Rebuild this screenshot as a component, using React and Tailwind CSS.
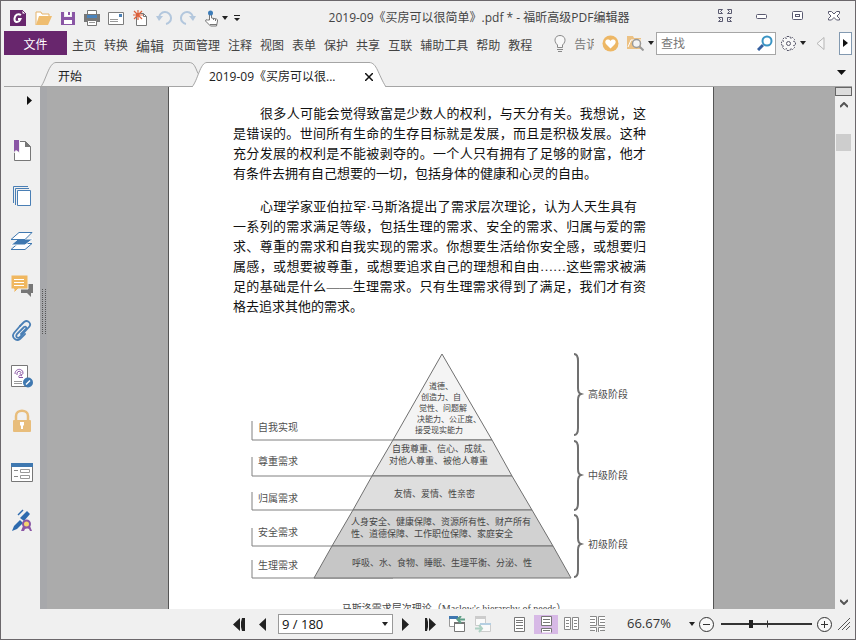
import React, { useState } from "react";

const menus = ["主页", "转换", "编辑", "页面管理", "注释", "视图", "表单", "保护", "共享", "互联", "辅助工具", "帮助", "教程"];

const levels = [
  { label: "自我实现", labelY: 79, tickY: 69, lineY: 88, fill: "#f4f4f4", points: "192,2 242,88 143,88" },
  { label: "尊重需求", labelY: 113, tickY: 105, lineY: 124, fill: "#e8e8e8", points: "143,88 242,88 262,124 122,124" },
  { label: "归属需求", labelY: 150, tickY: 140, lineY: 158, fill: "#dedede", points: "122,124 262,124 282,158 103,158" },
  { label: "安全需求", labelY: 184, tickY: 176, lineY: 194, fill: "#d2d2d2", points: "103,158 282,158 303,194 82,194" },
  { label: "生理需求", labelY: 217, tickY: 208, lineY: 226, fill: "#c6c6c6", points: "82,194 303,194 321,226 64,226" },
];

const stages = [
  { label: "高级阶段", top: 2, mid: 42, bottom: 83 },
  { label: "中级阶段", top: 89, mid: 123, bottom: 158 },
  { label: "初级阶段", top: 163, mid: 192, bottom: 225 },
];

const notes = [
  { x: 179, y: 37, text: "道德、", small: true },
  { x: 171, y: 48, text: "创造力、自", small: true },
  { x: 169, y: 59, text: "觉性、问题解", small: true },
  { x: 167, y: 70, text: "决能力、公正度、", small: true },
  { x: 165, y: 81, text: "接受现实能力", small: true },
  { x: 142, y: 100, text: "自我尊重、信心、成就、" },
  { x: 139, y: 112, text: "对他人尊重、被他人尊重" },
  { x: 144, y: 145, text: "友情、爱情、性亲密" },
  { x: 101, y: 173, text: "人身安全、健康保障、资源所有性、财产所有" },
  { x: 101, y: 185, text: "性、道德保障、工作职位保障、家庭安全" },
  { x: 102, y: 214, text: "呼吸、水、食物、睡眠、生理平衡、分泌、性" },
];

const Caret = () => (
  <svg width="6" height="4" viewBox="0 0 6 4" className="shrink-0">
    <path d="M0 0h6L3 4z" fill="#222" />
  </svg>
);

const IconButton = ({ label, className = "", children }) => (
  <button aria-label={label} title={label} className={`flex shrink-0 items-center justify-center ${className}`}>
    {children}
  </button>
);

const TitleBar = () => (
  <header className="flex h-[30px] shrink-0 items-center pt-1 pl-[9px] pr-[15px]">
    <svg width="17" height="17" viewBox="0 0 17 17" className="shrink-0">
      <path d="M0 0h12l4 4v12H0z" fill="#68266d" />
      <path d="M12 0v4h4z" fill="#fff" stroke="#68266d" />
      <path d="M11 5C8 3 5 5 4.500 8.500 4 13 9 13 10.500 9H8" fill="none" stroke="#fff" strokeWidth="2" />
    </svg>
    <div className="ml-2 flex items-center gap-2">
      <IconButton label="打开" className="w-[17px]">
        <svg width="17" height="16" viewBox="0 0 17 16">
          <path d="M1 15V2h5l1 2h7v3" fill="#fff" stroke="#e5b36a" />
          <path d="M1 15L4 6h13l-4 9z" fill="#efbd70" />
        </svg>
      </IconButton>
      <IconButton label="保存" className="w-4">
        <svg width="15" height="15" viewBox="0 0 15 15">
          <path d="M0 1h3v5h8V1h3v13H0z" fill="#8a56a5" />
          <path d="M4 1h6v4H4z" fill="#fff" />
          <path d="M7 1h2v3H7z" fill="#8a56a5" />
          <path d="M3 9h8v4H3z" fill="#fff" />
        </svg>
      </IconButton>
      <IconButton label="打印" className="w-4">
        <svg width="16" height="16" viewBox="0 0 16 16">
          <path d="M3.500 5V.5h9V5" fill="#fff" stroke="#777" />
          <path d="M0 4h16v8H0z" fill="#777" />
          <path d="M3 5h10v3H3z" fill="#4a83bb" />
          <path d="M3.500 10.500h9v5h-9z" fill="#fff" stroke="#777" />
          <path d="M5 12.500h6" stroke="#999" />
        </svg>
      </IconButton>
      <IconButton label="电子邮件" className="w-4">
        <svg width="16" height="13" viewBox="0 0 16 13">
          <path d="M.5.5h15v12H.5z" fill="#fff" stroke="#7d7d7d" />
          <path d="M11 2h3v3h-3z" fill="#4a7fb5" />
          <path d="M2 7.500h8M2 9.500h8" stroke="#999" />
        </svg>
      </IconButton>
      <IconButton label="新建" className="w-4">
        <svg width="15" height="17" viewBox="0 0 15 17">
          <path d="M3.500 3.500h7l3 3v9h-10z" fill="#fff" stroke="#777" />
          <path d="M10.500 3.500v3h3" fill="none" stroke="#777" />
          <path d="M5 0v10M0 5h10M1 1l8 8M9 1L1 9" stroke="#e0603a" strokeWidth="1.200" />
        </svg>
      </IconButton>
      <IconButton label="撤销" className="w-4">
        <svg width="16" height="16" viewBox="0 0 16 16">
          <path d="M3 8a6 6 0 1 1 7 6" fill="none" stroke="#b3c7dd" strokeWidth="2" />
          <path d="M0 6h7l-4 5z" fill="#b3c7dd" />
        </svg>
      </IconButton>
      <IconButton label="重做" className="w-4">
        <svg width="16" height="16" viewBox="0 0 16 16">
          <path d="M13 8a6 6 0 1 0-7 6" fill="none" stroke="#b3c7dd" strokeWidth="2" />
          <path d="M16 6H9l4 5z" fill="#b3c7dd" />
        </svg>
      </IconButton>
      <IconButton label="手型工具" className="gap-0.5">
        <svg width="16" height="17" viewBox="0 0 16 17">
          <path d="M5.500 10V3.500q1-1.500 2 0V8l5 1q1.500.5 1 2l-1 5h-6l-5-5q0-2 2-1z" fill="#fff" stroke="#777" />
          <path d="M9.500 8v2M11.500 9v2M6 14.500h7" stroke="#777" />
          <circle cx="6.500" cy="3" r="2.500" fill="#3c7cb8" />
        </svg>
        <Caret />
      </IconButton>
      <IconButton label="自定义快速访问工具栏" className="-ml-0.5">
        <svg width="6" height="7" viewBox="0 0 6 7">
          <path d="M0 0h6v1H0zM0 3h6L3 6z" fill="#222" />
        </svg>
      </IconButton>
    </div>
    <h1 className="min-w-0 flex-1 truncate text-center text-[12px] text-[#444]">
      2019-09《买房可以很简单》.pdf * - 福昕高级PDF编辑器
    </h1>
    <div className="flex items-center text-[#5a5a70]">
      <IconButton label="全屏" className="-mt-1">
        <svg width="15" height="14" viewBox="0 0 15 14" fill="none" stroke="currentColor">
          <path d="M.5.5h4l-2 2 2 2h-4zM9.500.5h4v4h-4l2-2zM.5 8.500h4v4h-4l2-2zM9.500 8.500h4l-2 2 2 2h-4z" />
        </svg>
      </IconButton>
      <IconButton label="最小化" className="-mt-1 ml-[23px]">
        <svg width="11" height="5" viewBox="0 0 11 5">
          <rect x=".5" y=".5" width="10" height="4" rx="1" fill="#fff" stroke="currentColor" />
        </svg>
      </IconButton>
      <IconButton label="还原" className="-mt-1 ml-[25px]">
        <svg width="11" height="10" viewBox="0 0 11 10">
          <rect x=".5" y=".5" width="10" height="8" rx="1" fill="#fff" stroke="currentColor" />
          <rect x="3.500" y="3.500" width="4" height="2" fill="none" stroke="currentColor" />
        </svg>
      </IconButton>
      <IconButton label="关闭" className="-mt-1 ml-[25px]">
        <svg width="12" height="10" viewBox="0 0 12 10">
          <path d="M.5.5h3l2.500 2.500L8.500.5h3v2L9 5l2.500 2.500v1.500h-3L6 6.500 3.500 9h-3V7.500L3 5 .5 2.500z" fill="#fff" stroke="currentColor" />
        </svg>
      </IconButton>
    </div>
  </header>
);

const MenuBar = () => {
  const [query, setQuery] = useState("");

  return (
    <nav className="flex h-6 shrink-0 items-center pl-[3px] pr-[3px] text-[12px] text-[#444]">
      <button className="h-6 w-[63px] shrink-0 bg-[#68266d] pt-1 text-white">文件</button>
      <div className="ml-[5px] flex shrink-0 items-center gap-2 pt-1.5">
        {menus.map((name) => (
          <button key={name} className={name === "编辑" ? "text-sm leading-5" : "leading-5"}>
            {name}
          </button>
        ))}
      </div>
      <button className="ml-[22px] flex min-w-0 flex-1 items-center gap-2 overflow-hidden text-[#777]">
        <svg width="12" height="17" viewBox="0 0 12 17" className="shrink-0">
          <path d="M3.500 12.500V10C-1 6 1 .5 6 .5S13 6 8.500 10v2.500z" fill="#f8f8f8" stroke="#888" />
          <path d="M3 14.500h6M4 16.500h4" stroke="#888" />
        </svg>
        <span className="w-5 overflow-hidden pt-1 text-left whitespace-nowrap">告诉</span>
      </button>
      <div className="flex shrink-0 items-center">
        <IconButton label="收藏">
          <svg width="17" height="17" viewBox="0 0 17 17">
            <circle cx="8.500" cy="8.500" r="8" fill="#edb765" />
            <path d="M8.500 13.500L4 9C1.500 5 6.500 3 8.500 6c2-3 7-1 4.500 3z" fill="#fff" />
          </svg>
        </IconButton>
        <IconButton label="查找文件" className="ml-2 gap-1">
          <svg width="17" height="16" viewBox="0 0 17 16">
            <path d="M0 1h6l1 2h7v11H0z" fill="#ecc183" />
            <path d="M1 12l3-7h10" fill="none" stroke="#fff" />
            <circle cx="9.500" cy="8.500" r="4" fill="#f3f3f3" stroke="#999" strokeWidth="1.500" />
            <path d="M12.500 11.500l4 4" stroke="#999" strokeWidth="2" />
          </svg>
          <Caret />
        </IconButton>
        <div className="ml-0.5 flex h-[23px] w-[120px] items-center border border-[#a6a6a6] bg-white pr-0.5">
          <input
            type="text"
            aria-label="查找"
            placeholder="查找"
            className="min-w-0 flex-1 pt-0.5 pl-1 text-[12px] leading-5 outline-none placeholder:text-[#777]"
            value={query}
            onChange={(e) => setQuery(e.target.value)}
          />
          <IconButton label="搜索">
            <svg width="16" height="16" viewBox="0 0 16 16">
              <path d="M1 15l5-5" stroke="#3560a0" strokeWidth="3" />
              <circle cx="10" cy="6" r="4.500" fill="#fff" stroke="#3a94c4" strokeWidth="2" />
            </svg>
          </IconButton>
        </div>
        <IconButton label="设置" className="ml-[5px] gap-1">
          <svg width="15" height="15" viewBox="0 0 15 15" fill="none" stroke="#555568">
            <path
              d="M6 .5h3l.5 2 2-1 2 2-1 2 2 .5v3l-2 .5 1 2-2 2-2-1-.5 2H6l-.5-2-2 1-2-2 1-2-2-.5V6l2-.5-1-2 2-2 2 1z"
              fill="#f8f8f8"
              strokeDasharray="2 1"
            />
            <circle cx="7.500" cy="7.500" r="2" />
          </svg>
          <Caret />
        </IconButton>
        <IconButton label="上一个" className="ml-2.5">
          <svg width="9" height="13" viewBox="0 0 9 13">
            <path d="M8 .5v12L1 6.500z" fill="#f6f6f6" stroke="#b5b5b5" />
          </svg>
        </IconButton>
        <IconButton label="下一个" className="ml-3.5 h-[23px] w-[13px] border border-[#8299b0] bg-white">
          <svg width="5" height="8" viewBox="0 0 5 8">
            <path d="M0 0l5 4-5 4z" fill="#111" />
          </svg>
        </IconButton>
      </div>
    </nav>
  );
};

const TabBar = () => (
  <div className="mt-[7px] flex h-[25px] shrink-0 items-stretch pl-[3px] pr-[3px] text-[12px] text-[#222]">
    <span className="w-[37px] border-b border-[#a5a5a5]" />
    <button className="relative w-[151px] shrink-0 pt-1 pl-[17px] text-left">
      <svg width="159" height="25" viewBox="0 0 159 25" className="absolute top-0 left-0">
        <path d="M0 24.500C5 18 8 .5 15 .5h133c5 0 6 4 9 11M0 24.500h159" fill="none" stroke="#a5a5a5" />
      </svg>
      开始
    </button>
    <div className="relative flex w-[193px] shrink-0 items-center justify-between pt-1 pr-3 pl-[17px]">
      <svg width="194" height="25" viewBox="0 0 194 25" className="absolute top-0 left-0">
        <path d="M0 25C6 18 8 .5 15 .5h162c8 0 9 12 17 24.500" fill="#fff" stroke="#a5a5a5" />
      </svg>
      <button className="relative">2019-09《买房可以很...</button>
      <IconButton label="关闭标签" className="relative">
        <svg width="8" height="8" viewBox="0 0 8 8">
          <path d="M0 0l8 8M8 0L0 8" stroke="#111" strokeWidth="1.500" />
        </svg>
      </IconButton>
    </div>
    <div className="flex flex-1 items-center justify-end border-b border-[#a5a5a5] pr-1.5">
      <IconButton label="标签列表" className="-mt-1">
        <svg width="9" height="5" viewBox="0 0 9 5">
          <path d="M0 0h9L4.500 5z" fill="#111" />
        </svg>
      </IconButton>
    </div>
  </div>
);

const SideBar = () => (
  <aside className="flex w-[39px] shrink-0 flex-col items-center pl-0.5">
    <IconButton label="展开" className="mt-2 ml-4 h-2.5">
      <svg width="5" height="9" viewBox="0 0 5 9">
        <path d="M0 0l5 4.500L0 9z" fill="#111" />
      </svg>
    </IconButton>
    <div className="mt-[34px] flex flex-col gap-[21px]">
      <IconButton label="书签" className="h-6">
        <svg width="22" height="22" viewBox="0 0 22 22">
          <path d="M3.500 1.500h11l5 5v14h-16z" fill="#fff" stroke="#777" />
          <path d="M14 1v6h6z" fill="#777" />
          <path d="M2 0h7v14l-3-3-4 3z" fill="#f0f0f0" />
          <path d="M3 0h5v12l-3-2-2 2z" fill="#8a56a5" />
        </svg>
      </IconButton>
      <IconButton label="页面缩略图" className="h-6">
        <svg width="22" height="22" viewBox="0 0 22 22" fill="none" stroke="#4a7fb5">
          <path d="M2.500 18V1.500H17M4.500 20V3.500H18" />
          <path d="M6.500 5.500h13v15h-13z" fill="#fff" />
        </svg>
      </IconButton>
      <IconButton label="图层" className="h-6">
        <svg width="24" height="20" viewBox="0 0 24 20">
          <path d="M1 18.500l7-6h14l-7 6z" fill="#fff" stroke="#3f78b0" />
          <path d="M1 14l7-6h15l-8 6z" fill="#3f78b0" stroke="#fff" />
          <path d="M1 8.500l8-7h13l-7 7z" fill="#fff" stroke="#3f78b0" />
        </svg>
      </IconButton>
      <IconButton label="注释" className="h-6">
        <svg width="22" height="22" viewBox="0 0 22 22">
          <path d="M10 9h12v9h-2v4l-4-4h-6z" fill="#777" />
          <path d="M0 0h17v14H7l-4 4v-4H0z" fill="#f0b75f" stroke="#f0f0f0" />
          <path d="M3 4.500h10M3 7.500h10M3 10.500h10" stroke="#fff" />
        </svg>
      </IconButton>
      <IconButton label="附件" className="h-6">
        <svg width="22" height="22" viewBox="0 0 22 22" fill="none" stroke="#4a7fb5" strokeWidth="1.800" strokeLinecap="round">
          <path d="M9 6l4-4c4-3 8 2 5 5l-9 10c-2 2-5 0-3-3l7-7c2-1 3 1 2 2l-5 5" />
          <path d="M9 6l-6 7c-3 4 2 9 6 6l5-5" />
        </svg>
      </IconButton>
      <IconButton label="签名" className="h-6">
        <svg width="23" height="24" viewBox="0 0 23 24">
          <path d="M1.500 1.500h16v21h-16z" fill="#fff" stroke="#777" />
          <path d="M5 10c0-6 8-6 8-1 0 2-3 2-3 0M7 11c-1-4 4-5 4-2M12 12c-2-2-4 0-3 1.500h4" fill="none" stroke="#8a56a5" />
          <path d="M4 17.500h8M4 19.500h8" stroke="#999" />
          <circle cx="18" cy="18.500" r="5" fill="#3f78b0" />
          <path d="M16 20.500l4-4" stroke="#fff" strokeWidth="1.500" />
        </svg>
      </IconButton>
      <IconButton label="安全" className="h-6">
        <svg width="20" height="24" viewBox="0 0 20 24">
          <path d="M4 12V7c0-7 12-7 12 0v5" fill="none" stroke="#e8bd7b" strokeWidth="2.500" />
          <rect x="1" y="11" width="18" height="12" rx="1" fill="#e8bd7b" />
          <path d="M8 13h4v3l-1 1v3H9v-3l-1-1z" fill="#fff" />
        </svg>
      </IconButton>
    </div>
    <IconButton label="域" className="mt-7 h-6">
      <svg width="22" height="20" viewBox="0 0 22 20">
        <path d="M.5 2.500h21v16H.5z" fill="#fff" stroke="#777" />
        <path d="M0 0h22v4H0z" fill="#3f78b0" />
        <path d="M3 7.500h4M3 13.500h4" stroke="#888" />
        <path d="M9.500 6.500h9v3h-9zM9.500 12.500h9v3h-9z" fill="none" stroke="#999" />
      </svg>
    </IconButton>
    <IconButton label="数字签名" className="mt-6 h-6">
      <svg width="22" height="24" viewBox="0 0 22 24">
        <path d="M1 22l2-5 6-6 3 3-6 6z" fill="#2d6aae" />
        <path d="M9 9l7-7 3 3-6 7z" fill="#2d6aae" />
        <path d="M7 6l5-5" stroke="#2d6aae" strokeWidth="1.500" />
        <path d="M12 17l-2 5h3l1-2 2-1 2 1 1 2h2l-2-5z" fill="#8a56a5" />
        <circle cx="15.500" cy="15" r="3.500" fill="#f5d56e" stroke="#8a56a5" strokeWidth="2" />
      </svg>
    </IconButton>
  </aside>
);

const HierarchyChart = () => (
  <svg
    viewBox="0 0 384 230"
    role="img"
    aria-label="马斯洛需求层次理论"
    className="mt-[35px] ml-[17px] h-[230px] w-[384px] font-['Noto_Sans_CJK_SC',sans-serif]"
  >
    {levels.map((l) => (
      <g key={l.label}>
        <path d={`M2 ${l.tickY}V${l.lineY}H143`} fill="none" stroke="#808080" />
        <polygon points={l.points} fill={l.fill} stroke="#707070" />
        <text x="8" y={l.labelY} fontSize="10" fill="#505050">{l.label}</text>
      </g>
    ))}
    {notes.map((n) => (
      <text key={n.text} x={n.x} y={n.y} fontSize={n.small ? 8 : 9} fill="#454545">
        {n.text}
      </text>
    ))}
    {stages.map((s) => (
      <g key={s.label}>
        <path
          d={`M324 ${s.top}q4 0 4 7V${s.mid - 6}q0 5 3 6q-3 1-3 6V${s.bottom - 7}q0 7-4 7`}
          fill="none"
          stroke="#707070"
          strokeWidth="2"
        />
        <text x="338" y={s.mid + 4} fontSize="10" fill="#505050">{s.label}</text>
      </g>
    ))}
  </svg>
);

const DocumentPage = () => (
  <article className="w-[546px] shrink-0 overflow-hidden border-x border-[#555] bg-white pt-[17px] pr-[67px] pl-16 font-['Liberation_Serif','Noto_Sans_CJK_SC',serif] text-[13px] leading-5 text-[#111]">
    <p className="text-justify indent-[27px]">
      很多人可能会觉得致富是少数人的权利，与天分有关。我想说，这是错误的。世间所有生命的生存目标就是发展，而且是积极发展。这种充分发展的权利是不能被剥夺的。一个人只有拥有了足够的财富，他才有条件去拥有自己想要的一切，包括身体的健康和心灵的自由。
    </p>
    <p className="mt-[13px] text-justify indent-[27px]">
      <span className="block pr-[9px] [text-align-last:justify]">心理学家亚伯拉罕·马斯洛提出了需求层次理论，认为人天生具有</span>
      <span className="block indent-0">
        一系列的需求满足等级，包括生理的需求、安全的需求、归属与爱的需求、尊重的需求和自我实现的需求。你想要生活给你安全感，或想要归属感，或想要被尊重，或想要追求自己的理想和自由……这些需求被满足的基础是什么——生理需求。只有生理需求得到了满足，我们才有资格去追求其他的需求。
      </span>
    </p>
    <HierarchyChart />
    <p className="mt-[17px] pl-[29px] text-center text-[10px] whitespace-nowrap text-[#444]">
      马斯洛需求层次理论（Maslow's hierarchy of needs）
    </p>
  </article>
);

const ScrollBar = () => (
  <div className="flex w-[17px] shrink-0 flex-col items-center bg-[#f0f0f0]">
    <button aria-label="拆分" className="h-[9px] w-full border border-[#666] bg-[#ddd]" />
    <IconButton label="向上滚动" className="h-[18px]">
      <svg width="8" height="6" viewBox="0 0 8 6">
        <path d="M0 5l4-4 4 4" fill="none" stroke="#555" strokeWidth="2" />
      </svg>
    </IconButton>
    <div className="mt-5 h-[17px] w-[15px] bg-[#cdcdcd]" />
    <div className="flex-1" />
    <IconButton label="向下滚动" className="mb-[3px] h-2">
      <svg width="8" height="6" viewBox="0 0 8 6">
        <path d="M0 1l4 4 4-4" fill="none" stroke="#555" strokeWidth="2" />
      </svg>
    </IconButton>
  </div>
);

const StatusBar = () => {
  const [page, setPage] = useState("9 / 180");
  const [zoom, setZoom] = useState(32);

  return (
    <footer className="flex h-[30px] shrink-0 items-center justify-end pr-1 text-[#333]">
      <IconButton label="第一页">
        <svg width="13" height="13" viewBox="0 0 13 13">
          <path d="M7 0v13L0 6.500zM12 0v13H9L8 9V4l1-4z" fill="#222" />
        </svg>
      </IconButton>
      <IconButton label="上一页" className="ml-[13px]">
        <svg width="8" height="13" viewBox="0 0 8 13">
          <path d="M7 0v13L0 6.500z" fill="#222" />
        </svg>
      </IconButton>
      <div className="ml-[11px] flex h-5 w-[115px] items-center border border-[#999] bg-white pr-1">
        <input
          type="text"
          aria-label="页码"
          className="min-w-0 flex-1 pl-[3px] text-[13px] leading-4 text-[#111] outline-none"
          value={page}
          onChange={(e) => setPage(e.target.value)}
        />
        <IconButton label="选择页码">
          <Caret />
        </IconButton>
      </div>
      <IconButton label="下一页" className="ml-2">
        <svg width="8" height="13" viewBox="0 0 8 13">
          <path d="M1 0v13l7-6.500z" fill="#222" />
        </svg>
      </IconButton>
      <IconButton label="最后一页" className="ml-[15px]">
        <svg width="13" height="13" viewBox="0 0 13 13">
          <path d="M1 0h2l1 4v5l-1 4H1zM5 0v13l7-6.500z" fill="#222" />
        </svg>
      </IconButton>
      <IconButton label="后退视图" className="ml-3">
        <svg width="17" height="17" viewBox="0 0 17 17">
          <path d="M.5 1.500h10v9H.5z" fill="#fff" stroke="#999" />
          <path d="M0 0h9v3H0z" fill="#3f78b0" />
          <path d="M5.500 6.500h10v9h-10z" fill="#fff" stroke="#777" />
          <path d="M5 6h11v2H5z" fill="#777" />
          <path d="M16 3.500H9M12 0L8.500 3.500 12 7" fill="none" stroke="#5f9f87" strokeWidth="2" />
        </svg>
      </IconButton>
      <IconButton label="前进视图" className="ml-[9px]">
        <svg width="17" height="17" viewBox="0 0 17 17">
          <path d="M.5 1.500h10v8H.5z" fill="#fafafa" stroke="#ccc" />
          <path d="M0 0h11v3H0z" fill="#ccc" />
          <path d="M5.500 7.500h10v8h-10z" fill="#fafafa" stroke="#ccc" />
          <path d="M5 7h11v2H5z" fill="#b5cfe2" />
          <path d="M0 12.500h6M4 9l3 3.500L4 16" fill="none" stroke="#aed0c3" strokeWidth="2" />
        </svg>
      </IconButton>
      <IconButton label="单页" className="ml-[22px]">
        <svg width="11" height="15" viewBox="0 0 11 15" stroke="#777">
          <path d="M.5.5h10v14H.5z" fill="#fff" />
          <path d="M2 3.500h7M2 5.500h7M2 8.500h7M2 11.500h7" />
        </svg>
      </IconButton>
      <IconButton label="连续" className="ml-[9px] h-[19px] w-6 bg-[#d7b9e6]">
        <svg width="11" height="17" viewBox="0 0 11 17" stroke="#777">
          <path d="M.5.5h10v9H.5zM.5 16.500v-4h10v4" fill="#fff" />
          <path d="M2 3.500h7M2 6.500h7M2 14.500h7" />
        </svg>
      </IconButton>
      <IconButton label="双页" className="ml-1.5">
        <svg width="15" height="14" viewBox="0 0 15 14" stroke="#888">
          <path d="M.5.5h6v12h-6zM8.500.5h6v12h-6z" fill="#fff" />
          <path d="M2 3.500h3M2 6.500h3M2 9.500h3M10 3.500h3M10 6.500h3M10 9.500h3" />
        </svg>
      </IconButton>
      <IconButton label="双页连续" className="ml-[11px]">
        <svg width="15" height="16" viewBox="0 0 15 16" stroke="#888">
          <path d="M0 .5h6.500v9H0M15 .5H8.500v9H15M0 11.500h6.500V16M15 11.500H8.500V16" fill="#fff" />
          <path d="M0 3.500h5M0 6.500h5M10 3.500h5M10 6.500h5M0 14.500h5M10 14.500h5" />
        </svg>
      </IconButton>
      <label className="ml-[22px] flex w-[68px] items-center text-[13px]">
        <select aria-label="缩放比例" className="min-w-0 flex-1 appearance-none outline-none">
          <option>66.67%</option>
          <option>100%</option>
        </select>
        <Caret />
      </label>
      <IconButton label="缩小" className="ml-1">
        <svg width="15" height="15" viewBox="0 0 15 15" stroke="#333" fill="none">
          <circle cx="7.500" cy="7.500" r="7" fill="#f8f8f8" />
          <path d="M4 7.500h7" />
        </svg>
      </IconButton>
      <div className="relative ml-[7px] flex w-[91px] items-center">
        <input
          type="range"
          aria-label="缩放"
          min="0"
          max="100"
          value={zoom}
          onChange={(e) => setZoom(Number(e.target.value))}
          className="h-0.5 w-full appearance-none bg-[#333] [&::-webkit-slider-thumb]:h-2 [&::-webkit-slider-thumb]:w-1 [&::-webkit-slider-thumb]:appearance-none [&::-webkit-slider-thumb]:bg-[#222]"
        />
        <span className="absolute top-1/2 left-1/2 h-[7px] w-px -translate-y-1/2 bg-[#333]" />
      </div>
      <IconButton label="放大" className="ml-[5px]">
        <svg width="15" height="15" viewBox="0 0 15 15" stroke="#333" fill="none">
          <circle cx="7.500" cy="7.500" r="7" fill="#f8f8f8" />
          <path d="M4 7.500h7M7.500 4v7" />
        </svg>
      </IconButton>
      <svg width="13" height="13" viewBox="0 0 13 13" className="ml-1.5 shrink-0" stroke="#555">
        <path d="M0 12L12 0M4 12l8-8M8 12l4-4" />
      </svg>
    </footer>
  );
};

const App = () => {
  return (
    <div
      lang="zh-CN"
      className="flex h-screen flex-col overflow-hidden border border-[#6b676b] bg-[#f0f0f0] font-['Open_Sans','Noto_Sans_CJK_SC',sans-serif]"
    >
      <TitleBar />
      <MenuBar />
      <TabBar />
      <div className="flex min-h-0 flex-1 pr-[3px]">
        <SideBar />
        {/* Resize handle */}
        <div className="flex w-[7px] shrink-0 items-center justify-center bg-[#a7a8ab]">
          <div className="mb-[74px] h-[45px] w-1 border-x border-dotted border-[#555]" />
        </div>
        <main className="flex min-w-0 flex-1 justify-center overflow-hidden bg-[#ababab]">
          <DocumentPage />
        </main>
        <ScrollBar />
      </div>
      <StatusBar />
    </div>
  );
};

export default App;
